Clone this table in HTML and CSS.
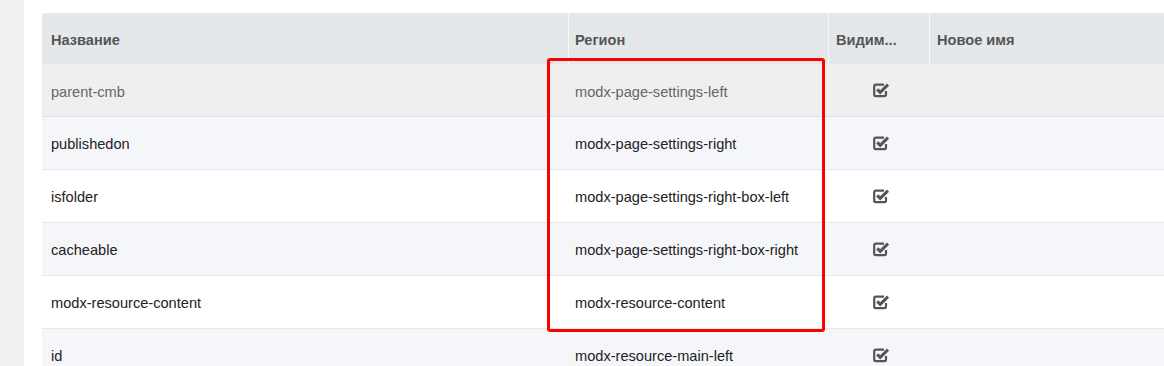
FILE: index.html
```html
<!DOCTYPE html>
<html lang="ru">
<head>
<meta charset="utf-8">
<title>Поля</title>
<link rel="stylesheet" href="styles.css">
</head>
<body>
<div class="page">
  <aside class="side"></aside>
  <main class="main">
    <div class="grid">
      <div class="row head">
        <div class="cell">Название</div>
        <div class="cell sep">Регион</div>
        <div class="cell sep">Видим...</div>
        <div class="cell sep">Новое имя</div>
      </div>
      <div class="row sel">
        <div class="cell">parent-cmb</div>
        <div class="cell">modx-page-settings-left</div>
        <div class="cell chk"><svg class="ico" width="18" height="16" viewBox="0 0 18 16"><path d="M13 9v3.6a1.6 1.6 0 0 1-1.6 1.6H2.8a1.6 1.6 0 0 1-1.6-1.6V4.2a1.6 1.6 0 0 1 1.6-1.6H11" fill="none" stroke="#555" stroke-width="2.2"/><path d="M4.2 7.4l3 3 7.8-7.8" fill="none" stroke="#555" stroke-width="3"/></svg></div>
        <div class="cell"></div>
      </div>
      <div class="row alt">
        <div class="cell">publishedon</div>
        <div class="cell">modx-page-settings-right</div>
        <div class="cell chk"><svg class="ico" width="18" height="16" viewBox="0 0 18 16"><path d="M13 9v3.6a1.6 1.6 0 0 1-1.6 1.6H2.8a1.6 1.6 0 0 1-1.6-1.6V4.2a1.6 1.6 0 0 1 1.6-1.6H11" fill="none" stroke="#555" stroke-width="2.2"/><path d="M4.2 7.4l3 3 7.8-7.8" fill="none" stroke="#555" stroke-width="3"/></svg></div>
        <div class="cell"></div>
      </div>
      <div class="row">
        <div class="cell">isfolder</div>
        <div class="cell">modx-page-settings-right-box-left</div>
        <div class="cell chk"><svg class="ico" width="18" height="16" viewBox="0 0 18 16"><path d="M13 9v3.6a1.6 1.6 0 0 1-1.6 1.6H2.8a1.6 1.6 0 0 1-1.6-1.6V4.2a1.6 1.6 0 0 1 1.6-1.6H11" fill="none" stroke="#555" stroke-width="2.2"/><path d="M4.2 7.4l3 3 7.8-7.8" fill="none" stroke="#555" stroke-width="3"/></svg></div>
        <div class="cell"></div>
      </div>
      <div class="row alt">
        <div class="cell">cacheable</div>
        <div class="cell">modx-page-settings-right-box-right</div>
        <div class="cell chk"><svg class="ico" width="18" height="16" viewBox="0 0 18 16"><path d="M13 9v3.6a1.6 1.6 0 0 1-1.6 1.6H2.8a1.6 1.6 0 0 1-1.6-1.6V4.2a1.6 1.6 0 0 1 1.6-1.6H11" fill="none" stroke="#555" stroke-width="2.2"/><path d="M4.2 7.4l3 3 7.8-7.8" fill="none" stroke="#555" stroke-width="3"/></svg></div>
        <div class="cell"></div>
      </div>
      <div class="row">
        <div class="cell">modx-resource-content</div>
        <div class="cell">modx-resource-content</div>
        <div class="cell chk"><svg class="ico" width="18" height="16" viewBox="0 0 18 16"><path d="M13 9v3.6a1.6 1.6 0 0 1-1.6 1.6H2.8a1.6 1.6 0 0 1-1.6-1.6V4.2a1.6 1.6 0 0 1 1.6-1.6H11" fill="none" stroke="#555" stroke-width="2.2"/><path d="M4.2 7.4l3 3 7.8-7.8" fill="none" stroke="#555" stroke-width="3"/></svg></div>
        <div class="cell"></div>
      </div>
      <div class="row alt">
        <div class="cell">id</div>
        <div class="cell">modx-resource-main-left</div>
        <div class="cell chk"><svg class="ico" width="18" height="16" viewBox="0 0 18 16"><path d="M13 9v3.6a1.6 1.6 0 0 1-1.6 1.6H2.8a1.6 1.6 0 0 1-1.6-1.6V4.2a1.6 1.6 0 0 1 1.6-1.6H11" fill="none" stroke="#555" stroke-width="2.2"/><path d="M4.2 7.4l3 3 7.8-7.8" fill="none" stroke="#555" stroke-width="3"/></svg></div>
        <div class="cell"></div>
      </div>
      <div class="mark"></div>
    </div>
  </main>
</div>
</body>
</html>
```
FILE: styles.css
```css
html, body {
  margin: 0;
  padding: 0;
  height: 100%;
  overflow: hidden;
  background: #ffffff;
}
.page {
  display: flex;
  height: 366px;
  font-family: "Liberation Sans", Arial, sans-serif;
  font-size: 14.6px;
  color: #222;
}
.side {
  width: 24px;
  flex: 0 0 24px;
  background: #f0f0f0;
}
.main {
  flex: 1;
  padding: 13px 0 0 18px;
  min-width: 0;
}
.grid {
  position: relative;
  width: 1140px;
}
.row {
  display: grid;
  grid-template-columns: 526px 260px 101px 1fr;
  height: 53px;
  box-sizing: border-box;
  border-bottom: 1px solid #e6e7e9;
  background: #ffffff;
}
.row.alt {
  background: #f5f6f9;
}
.row.sel {
  height: 52px;
  background: #efefef;
  color: #666;
  border-bottom-color: #e2e2e2;
}
.row.head {
  height: 52px;
  background: #e4e8eb;
  border-radius: 4px 4px 0 0;
  border-bottom-color: #eceef0;
  font-weight: bold;
  color: #555;
}
.cell {
  display: flex;
  align-items: center;
  padding: 2px 7px 0 9px;
  white-space: nowrap;
  overflow: hidden;
  min-width: 0;
}
.row .cell:nth-child(n+2) {
  padding-left: 7px;
}
.cell.sep {
  border-left: 1px solid #f7f8fa;
  padding-left: 7px;
}
.head .cell:nth-child(2) {
  padding-left: 6px;
}
.cell.chk {
  justify-content: center;
  padding: 0;
}
.ico {
  display: block;
  margin-top: -1px;
  margin-left: -1px;
}
.mark {
  position: absolute;
  left: 505px;
  top: 45px;
  width: 278px;
  height: 274px;
  box-sizing: border-box;
  border: 3px solid #ff0000;
  border-radius: 3px;
}
```
